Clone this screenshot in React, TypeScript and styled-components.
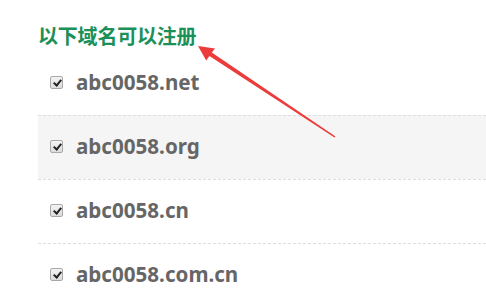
import styled, { createGlobalStyle } from 'styled-components';

const domains = ['abc0058.net', 'abc0058.org', 'abc0058.cn', 'abc0058.com.cn'];

const GlobalStyle = createGlobalStyle`
  html, body {
    margin: 0;
    padding: 0;
    background: #fff;
  }
`;

const App = () => {
  return (
    <Page>
      <GlobalStyle />
      <Title>以下域名可以注册</Title>
      <List>
        {domains.map((name, i) => (
          <Row key={name} $shaded={i === 1} $first={i === 0}>
            <Check type="checkbox" defaultChecked />
            <Domain>{name}</Domain>
          </Row>
        ))}
      </List>
      <Arrow viewBox="0 0 486 298" width="486" height="298">
        <polygon
          points="198,46 215,48.4 211.8,52.4 335.5,136.4 334.5,137.4 209.4,56.1 206.2,60.6"
          fill="#ec3b3b"
        />
      </Arrow>
    </Page>
  );
};

export default App;

const Page = styled.div`
  position: relative;
  width: 486px;
  height: 298px;
  overflow: hidden;
  padding-left: 38px;
  box-sizing: border-box;
  font-family: 'Noto Sans', 'Noto Sans CJK SC', sans-serif;
`;

const Title = styled.h2`
  margin: 0;
  height: 51px;
  padding-top: 24px;
  box-sizing: border-box;
  font-family: 'Noto Sans CJK SC', sans-serif;
  font-size: 20px;
  line-height: 24px;
  font-weight: 700;
  color: #1b9058;
  letter-spacing: -0.2px;
`;

const List = styled.ul`
  list-style: none;
  margin: 0;
  padding: 0;
`;

const Row = styled.li<{ $shaded: boolean; $first: boolean }>`
  height: 64px;
  box-sizing: border-box;
  border-top: 1px dashed ${(p) => (p.$first ? 'transparent' : '#dedede')};
  background: ${(p) => (p.$shaded ? '#f5f5f5' : '#fff')};
  padding-left: 12px;
  padding-bottom: 3px;

  display: flex;
  align-items: center;
  gap: 13px;
`;

const Check = styled.input`
  appearance: none;
  margin: 1px 0 0;
  width: 13px;
  height: 13px;
  border: 1px solid #a9a9a9;
  border-radius: 2px;
  background: linear-gradient(#f4f4f4, #dcdcdc);
  position: relative;
  flex-shrink: 0;

  &:checked::after {
    content: '';
    position: absolute;
    left: 3.5px;
    top: 1px;
    width: 3px;
    height: 6px;
    border: solid #222;
    border-width: 0 2px 2px 0;
    transform: rotate(40deg);
  }
`;

const Domain = styled.span`
  font-family: 'Noto Sans', sans-serif;
  font-size: 20.6px;
  font-weight: 700;
  color: #666;
  line-height: 1;
`;

const Arrow = styled.svg`
  position: absolute;
  left: 0;
  top: 0;
  pointer-events: none;
`;
